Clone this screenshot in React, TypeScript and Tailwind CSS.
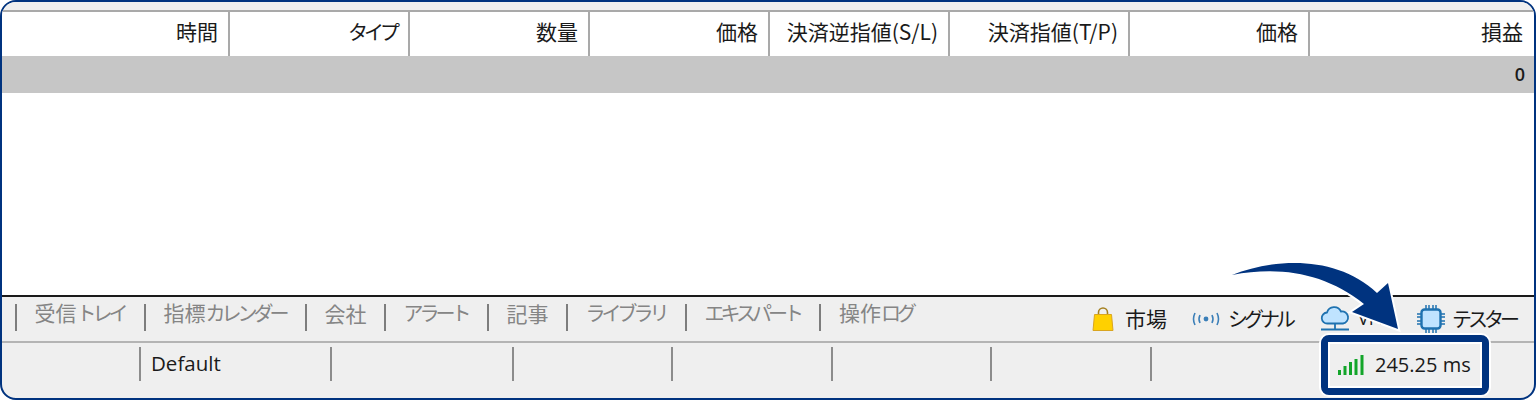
import React from "react";

const font = { fontFamily: '"Noto Sans CJK JP", "Liberation Sans", sans-serif' };
const latin = { fontFamily: '"Open Sans", "Noto Sans", sans-serif' };

const columns = [
  { label: "時間", width: "w-[228px]" },
  { label: "タイプ", width: "w-[180px]" },
  { label: "数量", width: "w-[180px]" },
  { label: "価格", width: "w-[180px]" },
  { label: "決済逆指値(S/L)", width: "w-[180px]" },
  { label: "決済指値(T/P)", width: "w-[180px]" },
  { label: "価格", width: "w-[180px]" },
  { label: "損益", width: "flex-1" },
];

const tabs = ["受信トレイ", "指標カレンダー", "会社", "アラート", "記事", "ライブラリ", "エキスパート", "操作ログ"];
const statusCells = ["w-[139px]", "w-[191px]", "w-[182px]", "w-[159px]", "w-[160px]", "w-[159px]", "w-[160px]"];

// the reference font has narrow kana, so kana runs are set smaller and tighter
function Jp({ text }: { text: string }) {
  const parts = text.split(/([\u30a0-\u30ff]+)/).filter(Boolean);
  return (
    <>
      {parts.map((p, i) =>
        /[\u30a0-\u30ff]/.test(p) ? (
          <span key={i} className="text-[20px] tracking-[-4px] pr-[2px]">{p}</span>
        ) : (
          <span key={i}>{p}</span>
        )
      )}
    </>
  );
}

function BagIcon() {
  return (
    <svg width="22" height="24" viewBox="0 0 22 24">
      <path d="M6.5 9V5.5a4.5 4.5 0 0 1 9 0V9" fill="none" stroke="#a5801f" strokeWidth="1.6" />
      <path d="M2.5 7.5h17l1.5 16H1z" fill="#ffd000" stroke="#d9a520" strokeWidth="1" />
    </svg>
  );
}

function SignalIcon() {
  return (
    <svg width="30" height="16" viewBox="0 0 30 16" fill="none" stroke="#3b7fb8" strokeWidth="1.6">
      <path d="M4 2Q1 8 4 14M26 2Q29 8 26 14M9 4Q7 8 9 12M21 4Q23 8 21 12" />
      <circle cx="15" cy="8" r="2.4" fill="#3b7fb8" stroke="none" />
    </svg>
  );
}

function CloudIcon() {
  return (
    <svg width="30" height="28" viewBox="0 0 30 28" fill="none" stroke="#1f72b0" strokeWidth="1.8">
      <path d="M7.5 18.5a5.5 5.5 0 0 1-.5-11 7.5 7.5 0 0 1 14-1 6 6 0 0 1 2 12z" fill="#bfe3ff" />
      <path d="M15 18.500v6M1 24.500h28" />
    </svg>
  );
}

function ChipIcon() {
  return (
    <svg width="28" height="28" viewBox="0 0 28 28" fill="none" stroke="#1f72b0">
      <path strokeWidth="1.5" d="M9 0v5M12 0v5M16 0v5M19 0v5M9 23v5M12 23v5M16 23v5M19 23v5M0 9h5M0 12h5M0 16h5M0 19h5M23 9h5M23 12h5M23 16h5M23 19h5" />
      <rect x="4.500" y="4.500" width="19" height="19" rx="3" fill="#bfe3ff" strokeWidth="2.4" />
    </svg>
  );
}

function Arrow() {
  return (
    <svg className="absolute left-[1225px] top-[255px]" width="185" height="85" viewBox="0 0 185 85">
      <path
        d="M7 20C50 3 112 0 152 38L163 28L173 74L127 57L139 49C100 18 55 11 7 20Z"
        fill="#00337f"
        stroke="#ffffff"
        strokeWidth="4"
        strokeLinejoin="miter"
        paintOrder="stroke"
      />
    </svg>
  );
}

export default function App() {
  return (
    <div className="relative w-[1536px] h-[400px] overflow-hidden bg-white" style={font}>
      <div className="flex h-[400px] flex-col overflow-hidden rounded-[16px] border-2 border-[#00337f] bg-[#efefef]">
        <div className="h-[8px] shrink-0 bg-[#efefef]" />
        <div className="flex h-[46px] shrink-0 border-t-2 border-[#a9a9a9] bg-white text-[21px] leading-[38px] text-[#1a1a1a]">
          {columns.map((c, i) => (
            <div
              key={i}
              className={`${c.width} whitespace-nowrap border-r-2 border-[#a9a9a9] pr-[10px] text-right last:border-r-0 last:pr-[11px]`}
            >
              <Jp text={c.label} />
            </div>
          ))}
        </div>
        <div
          className="flex h-[37px] shrink-0 items-center justify-end bg-[#c6c6c6] pr-[9px] text-[18px] font-semibold text-[#1a1a1a]"
          style={latin}
        >
          0
        </div>
        <div className="flex-1 border-b-2 border-[#1a1a1a] bg-white" />
        <div className="flex h-[46px] shrink-0 items-start justify-between border-b-2 border-[#b4b4b4] pl-[13px] pr-[16px]">
          <div className="flex h-[40px] items-center gap-[17.500px] text-[21px] text-[#858585]">
            {tabs.map((t) => (
              <React.Fragment key={t}>
                <div className="h-[27px] w-[2px] bg-[#7d7d7d]" />
                <span className="-mt-[9px] whitespace-nowrap leading-[26px]"><Jp text={t} /></span>
              </React.Fragment>
            ))}
          </div>
          <div className="flex h-[43px] items-center text-[21px] text-[#1a1a1a]">
            <BagIcon />
            <span className="ml-[11px] mr-[24px]">市場</span>
            <SignalIcon />
            <span className="ml-[7px] mr-[26px]"><Jp text="シグナル" /></span>
            <CloudIcon />
            <span className="ml-[8px] mr-[37px] w-[22px] text-[18px]" style={latin}>VPS</span>
            <ChipIcon />
            <span className="ml-[7px]"><Jp text="テスター" /></span>
          </div>
        </div>
        <div className="flex h-[55px] shrink-0 items-start pt-[4px] text-[20.500px] text-[#1a1a1a]">
          {statusCells.map((w, i) => (
            <div key={i} className={`${w} h-[34px] border-r-2 border-[#8c8c8c] leading-[30px]`}>
              {i === 1 ? <span className="pl-[10px]" style={latin}>Default</span> : null}
            </div>
          ))}
        </div>
      </div>
      <Arrow />
      <div className="absolute left-[1319px] top-[333px] rounded-[10px] border-2 border-white">
        <div className="rounded-[8px] border-[7px] border-[#00337f]">
          <div className="flex h-[46px] w-[154px] items-center border-2 border-white bg-[#efefef] pl-[8px] pb-[1px] text-[20px] text-[#1a1a1a]">
            <svg width="26" height="20" viewBox="0 0 26 20" fill="#13a52a">
              <rect x="0" y="15" width="3" height="5" />
              <rect x="5.500" y="11" width="3" height="9" />
              <rect x="11" y="7" width="3" height="13" />
              <rect x="16.500" y="4" width="3" height="16" />
              <rect x="22.500" y="0" width="3" height="20" />
            </svg>
            <span className="ml-[11px] whitespace-nowrap" style={latin}>245.25 ms</span>
          </div>
        </div>
      </div>
    </div>
  );
}
